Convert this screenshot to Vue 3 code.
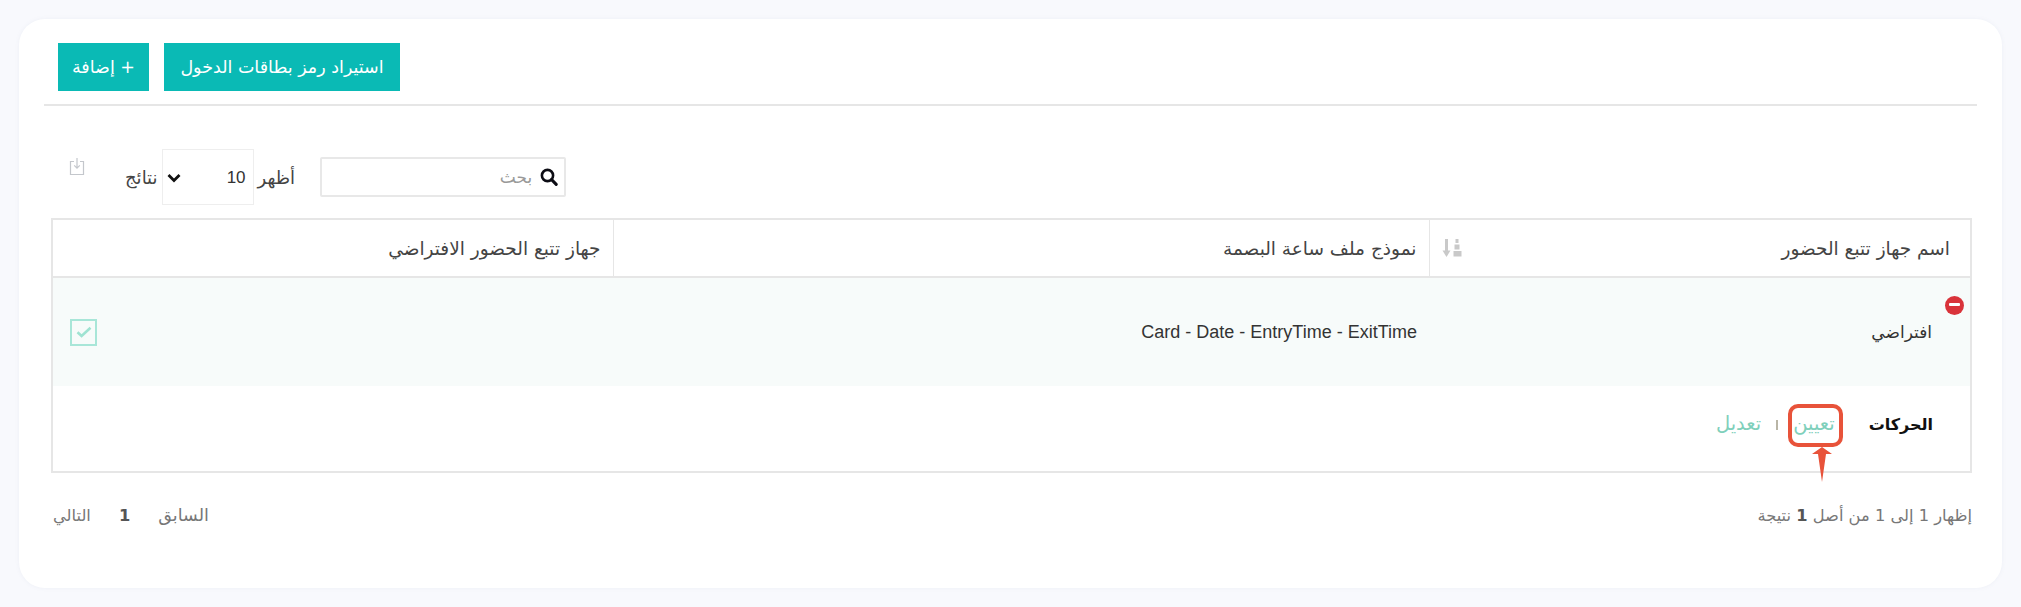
<script setup>
const columns = [
  { title: 'اسم جهاز تتبع الحضور', sortable: true },
  { title: 'نموذج ملف ساعة البصمة', sortable: false },
  { title: 'جهاز تتبع الحضور الافتراضي', sortable: false }
]
</script>

<template>
  <div class="page" dir="rtl">
    <section class="card">
      <div class="actions-bar">
        <button class="btn btn-import" type="button">استيراد رمز بطاقات الدخول</button>
        <button class="btn btn-add" type="button">+ إضافة</button>
      </div>

      <div class="toolbar">
        <label class="search">
          <svg class="search-icon" viewBox="0 0 18 18" aria-hidden="true">
            <circle cx="7.5" cy="7.5" r="5.6" fill="none" stroke="#0c0c14" stroke-width="2.6" />
            <path d="M11.6 11.6 16.2 16.4" stroke="#0c0c14" stroke-width="3" stroke-linecap="round" />
          </svg>
          <input class="search-input" type="text" placeholder="بحث" />
        </label>
        <div class="length">
          <span>أظهر</span>
          <span class="select-wrap">
            <select class="length-select">
              <option>10</option>
            </select>
            <svg class="chevron" viewBox="0 0 14 10" aria-hidden="true">
              <path d="M1.5 2 7 7.5 12.5 2" fill="none" stroke="#111" stroke-width="2.8" />
            </svg>
          </span>
          <span>نتائج</span>
        </div>
        <svg class="export-icon" viewBox="0 0 16 19" aria-hidden="true">
          <path d="M5 4.5H1.5V17.5H14.5V4.5H11" fill="none" stroke="#c4c7cc" stroke-width="1.2" />
          <path d="M8 1V11M5.2 8.4 8 11.2 10.8 8.4" fill="none" stroke="#c4c7cc" stroke-width="1.2" />
        </svg>
      </div>

      <table class="grid">
        <colgroup>
          <col class="col-name" />
          <col class="col-template" />
          <col />
        </colgroup>
        <thead>
          <tr>
            <th v-for="col in columns" :key="col.title">
              <div class="th-inner">
                <span>{{ col.title }}</span>
                <svg v-if="col.sortable" class="sort-icon" viewBox="0 0 20 20" aria-hidden="true">
                  <path d="M4.5 1V14" stroke="#c9c9c9" stroke-width="3" />
                  <path d="M0.5 12.5H8.5L4.5 19Z" fill="#c9c9c9" />
                  <path d="M13.5 1h3v4h-3zM12.5 6.5h5v5h-5zM11.5 13h8v5.5h-8z" fill="#c9c9c9" />
                </svg>
              </div>
            </th>
          </tr>
        </thead>
        <tbody>
          <tr class="data-row">
            <td class="name-cell">
              <span class="collapse-dot"></span>
              افتراضي
            </td>
            <td class="latin" dir="ltr">Card - Date - EntryTime - ExitTime</td>
            <td>
              <span class="check">
                <svg viewBox="0 0 16 12" aria-hidden="true">
                  <path d="M1.5 6.2 5.6 10 14.5 1.8" fill="none" stroke="#9fe3d2" stroke-width="2.6" />
                </svg>
              </span>
            </td>
          </tr>
          <tr class="action-row">
            <td colspan="3">
              <div class="action-inner">
                <strong class="action-label">الحركات</strong>
                <a class="link link-assign">
                  تعيين
                  <span class="callout-box"></span>
                  <svg class="callout-arrow" viewBox="0 0 20 35" aria-hidden="true">
                    <path d="M10 0 20 7H14L10 35 6 7H0Z" fill="#e8533a" />
                  </svg>
                </a>
                <span class="sep"></span>
                <a class="link">تعديل</a>
              </div>
            </td>
          </tr>
        </tbody>
      </table>

      <div class="footer">
        <div class="info">إظهار 1 إلى 1 من أصل <b>1</b> نتيجة</div>
        <div class="pager">
          <span class="prev">السابق</span>
          <b>1</b>
          <span>التالي</span>
        </div>
      </div>
    </section>
  </div>
</template>

<style>
html, body {
  margin: 0;
  background: #f8f9fd;
}
</style>

<style scoped>
.page {
  box-sizing: border-box;
  width: 2021px;
  height: 607px;
  padding: 19px;
  background: #f8f9fd;
  font-family: "DejaVu Sans", "Liberation Sans", sans-serif;
  font-size: 15px;
  color: #444;
}
.card {
  box-sizing: border-box;
  height: 569px;
  padding: 24px 30px 0 32px;
  background: #fff;
  border-radius: 26px;
  box-shadow: 0 0 4px rgba(120, 130, 170, 0.08);
}
.actions-bar {
  display: flex;
  justify-content: flex-end;
  gap: 15px;
  padding-bottom: 13px;
  padding-left: 14px;
  margin-right: -5px;
  margin-left: -7px;
  border-bottom: 2px solid #e6e6e6;
}
.btn {
  height: 48px;
  border: 0;
  border-radius: 0;
  background: #0abab5;
  color: #fff;
  font: inherit;
  font-size: 17.5px;
  padding: 0;
}
.btn-import { width: 236px; }
.btn-add { width: 91px; }

.toolbar {
  display: flex;
  align-items: center;
  justify-content: flex-end;
  height: 56px;
  margin-top: 43px;
  padding-left: 18px;
}
.search {
  box-sizing: border-box;
  display: flex;
  align-items: center;
  gap: 8px;
  width: 246px;
  height: 40px;
  padding: 0 6px 0 0;
  border: 2px solid #e8e8e8;
  border-radius: 2px;
  margin-left: 25px;
}
.search-icon {
  width: 18px;
  height: 18px;
  flex: none;
}
.search-input {
  flex: 1;
  min-width: 0;
  border: 0;
  outline: 0;
  padding: 0;
  font: inherit;
  font-size: 17px;
  color: #444;
  background: transparent;
}
.search-input::placeholder { color: #999; }
.length {
  display: flex;
  align-items: center;
  gap: 4px;
  font-size: 18px;
  margin-left: 40px;
}
.select-wrap {
  position: relative;
  display: block;
  width: 92px;
  height: 56px;
}
.length-select {
  box-sizing: border-box;
  display: block;
  width: 92px;
  height: 56px;
  border: 1px solid #eee;
  background: #fff;
  font-family: "Liberation Sans", sans-serif;
  font-size: 17px;
  color: #333;
  padding: 0 7px 0 24px;
  border-radius: 0;
  outline: 0;
  appearance: none;
}
.chevron {
  position: absolute;
  left: 5px;
  top: 24px;
  width: 14px;
  height: 10px;
  pointer-events: none;
}
.export-icon {
  width: 16px;
  height: 19px;
  align-self: flex-start;
  margin-top: 8px;
  flex: none;
}

.grid {
  width: 1921px;
  margin-top: 13px;
  border-collapse: collapse;
  table-layout: fixed;
  border: 2px solid #e6e6e6;
}
.col-name { width: 542px; }
.col-template { width: 816px; }
th {
  height: 56px;
  padding: 0 12px;
  border-right: 1px solid #e6e6e6;
  border-left: 1px solid #e6e6e6;
  border-bottom: 2px solid #e6e6e6;
  font-weight: 400;
  font-size: 18.5px;
  text-align: right;
  color: #444;
}
th:first-child { padding-right: 20px; }
.th-inner {
  display: flex;
  align-items: center;
  justify-content: space-between;
}
.sort-icon {
  width: 20px;
  height: 20px;
  flex: none;
}
.data-row td {
  height: 108px;
  padding: 0 12px;
  background: #f7fbfa;
  font-size: 17px;
  color: #333;
  vertical-align: middle;
}
.name-cell {
  position: relative;
  padding-right: 38px !important;
}
.collapse-dot {
  position: absolute;
  top: 18px;
  right: 6px;
  width: 19px;
  height: 19px;
  border-radius: 50%;
  background: #d9333a;
}
.collapse-dot::after {
  content: "";
  position: absolute;
  left: 4px;
  right: 4px;
  top: 7px;
  height: 3px;
  background: #fff;
  border-radius: 1px;
}
.data-row .latin {
  font-family: "Liberation Sans", sans-serif;
  font-size: 18px;
  text-align: right;
}
.check {
  display: flex;
  align-items: center;
  justify-content: center;
  box-sizing: border-box;
  width: 27px;
  height: 27px;
  margin-right: auto;
  margin-left: 5px;
  border: 2px solid #a8e6d8;
}
.check svg {
  width: 16px;
  height: 12px;
}
.action-row td {
  height: 76px;
  padding: 0 37px 9px 0;
}
.action-inner {
  display: flex;
  align-items: center;
}
.action-label {
  color: #111;
  font-weight: 700;
  font-size: 16px;
  margin-left: 34px;
}
.link {
  position: relative;
  display: block;
  color: #7fd0bb;
  font-size: 19.5px;
  line-height: 24px;
}
.sep {
  width: 2px;
  height: 10px;
  margin: 2px 15px 0;
  background: #b9b5a6;
}
.callout-box {
  position: absolute;
  top: -8px;
  bottom: -11px;
  left: -5px;
  right: -8px;
  border: 4px solid #e8533a;
  border-radius: 10px;
}
.callout-arrow {
  position: absolute;
  left: 50%;
  top: calc(100% + 11px);
  width: 20px;
  height: 35px;
  margin-left: -2px;
}
.footer {
  display: flex;
  align-items: center;
  justify-content: space-between;
  margin-top: 32px;
  padding: 0 0 0 2px;
  color: #777;
  font-size: 16.3px;
}
.info b { color: #555; }
.pager {
  display: flex;
  align-items: center;
  gap: 28px;
}
.pager b { color: #555; }
.prev { font-size: 17.5px; }
</style>
